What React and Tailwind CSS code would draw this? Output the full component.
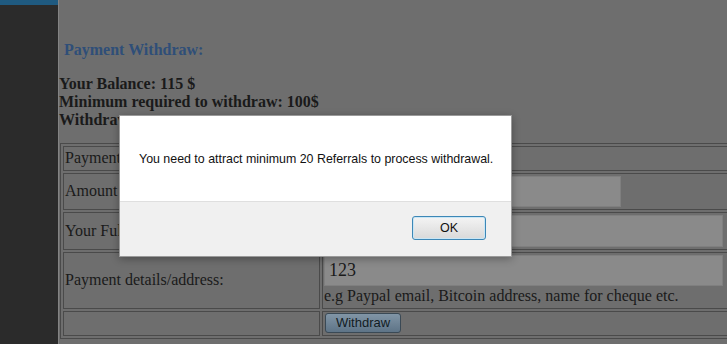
export default function App() {
  const serif = { fontFamily: '"Liberation Serif", "Times New Roman", serif' };
  const sans = { fontFamily: '"Liberation Sans", Arial, sans-serif' };

  return (
    <div className="relative flex h-[344px] w-[727px] overflow-hidden bg-[#6e6e6e]" style={serif}>
      {/* sidebar */}
      <aside className="flex w-[59px] shrink-0 flex-col border-r border-[#838383] bg-[#2b2b2b]">
        <div className="h-[5px] bg-[#1f5a80]" />
      </aside>

      {/* main content */}
      <main className="flex-1 text-[#1a1a1a]">
        <h3 className="ml-[5px] mt-[41px] text-[16px] font-bold leading-[18px] text-[#2f4e78]">
          Payment Withdraw:
        </h3>
        <div className="mt-[16px] text-[16px] font-bold leading-[17.5px]">
          <div>Your Balance: 115 $</div>
          <div>Minimum required to withdraw: 100$</div>
          <div className="pt-px">Withdraw</div>
        </div>

        <table className="ml-px mt-[14px] w-[671px] table-fixed border-separate border-spacing-[2px] border border-[#4a4a4a] text-[16px] leading-[18px]">
          <tbody>
            <tr>
              <td className="h-[25px] w-[257px] border border-[#4a4a4a] px-px">Payment method:</td>
              <td className="border border-[#4a4a4a] px-px"></td>
            </tr>
            <tr>
              <td className="border border-[#4a4a4a] px-px">Amount ($):</td>
              <td className="border border-[#4a4a4a] px-px py-[2px]">
                <div className="h-[31px] w-[297px] border border-[#7f7f7f] bg-[#8a8a8a]" />
              </td>
            </tr>
            <tr>
              <td className="border border-[#4a4a4a] px-px">Your Full name:</td>
              <td className="border border-[#4a4a4a] px-px py-[2px]">
                <div className="h-[32px] w-[399px] border border-[#7f7f7f] bg-[#8a8a8a]" />
              </td>
            </tr>
            <tr>
              <td className="border border-[#4a4a4a] px-px">Payment details/address:</td>
              <td className="border border-[#4a4a4a] px-px pt-[2px] pb-[3px]">
                <div className="flex h-[31px] w-[399px] items-center border border-[#7f7f7f] bg-[#8a8a8a] px-[4px] text-[18px]">
                  123
                </div>
                <div className="mt-px whitespace-nowrap">
                  e.g Paypal email, Bitcoin address, name for cheque etc.
                </div>
              </td>
            </tr>
            <tr>
              <td className="h-[25px] border border-[#4a4a4a] px-px"></td>
              <td className="border border-[#4a4a4a] px-px">
                <button
                  className="ml-px flex h-[20px] w-[76px] items-center justify-center rounded-[3px] border border-[#3a4955] bg-gradient-to-b from-[#8195a6] to-[#5e7487] text-[13px] text-[#121c24]"
                  style={sans}
                >
                  Withdraw
                </button>
              </td>
            </tr>
          </tbody>
        </table>
      </main>

      {/* alert dialog */}
      <div
        className="absolute left-[119px] top-[115px] flex h-[142px] w-[393px] flex-col border border-[#9a9a9a] shadow-[0_2px_8px_rgba(0,0,0,0.3)]"
        style={sans}
      >
        <div className="flex h-[85px] items-center bg-white pl-[19px] pt-[1px] text-[12.4px] text-[#111]">
          You need to attract minimum 20 Referrals to process withdrawal.
        </div>
        <div className="flex flex-1 items-center justify-end border-t border-[#dfdfdf] bg-[#f0f0f0] pr-[25px] pb-[2px]">
          <button className="flex h-[24px] w-[74px] items-center justify-center rounded-[3px] border border-[#3d87b6] bg-gradient-to-b from-[#f4f4f4] to-[#d9d9d9] text-[12.5px] text-[#111] shadow-[inset_0_0_0_1px_#c9e6f5]">
            OK
          </button>
        </div>
      </div>
    </div>
  );
}
